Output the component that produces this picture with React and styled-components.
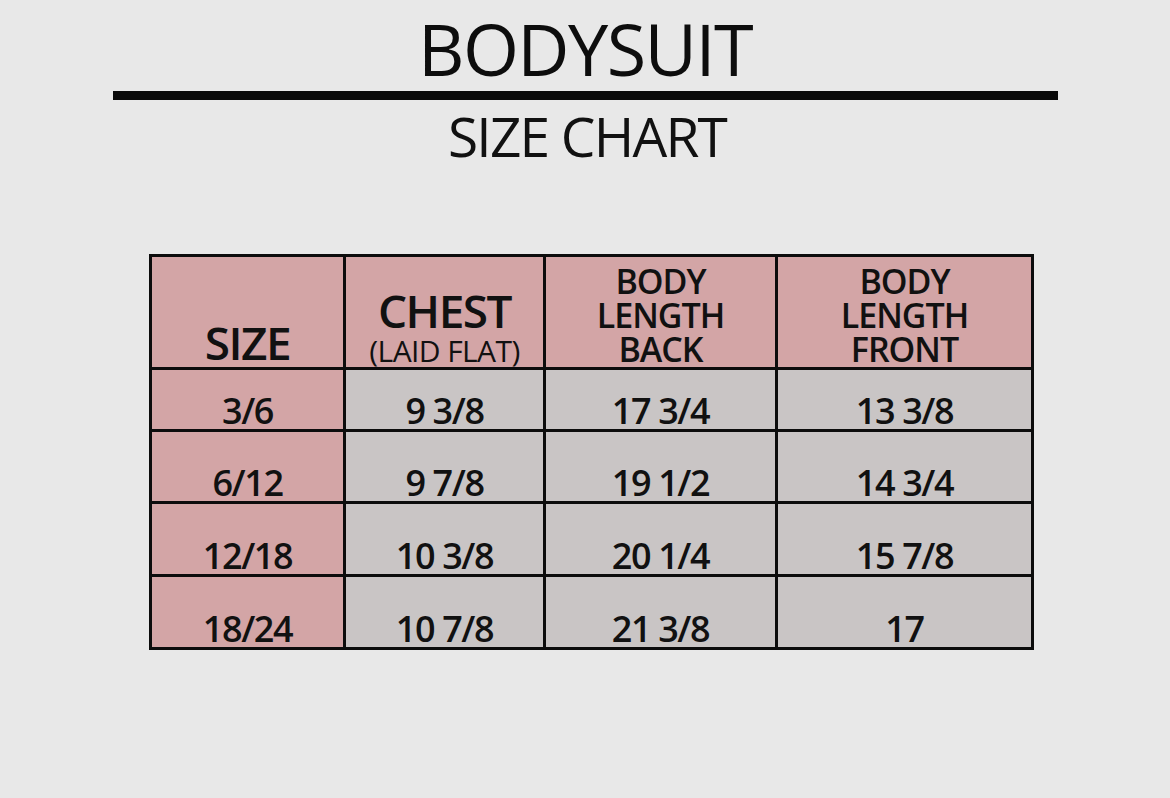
import React from "react";
import styled, { createGlobalStyle } from "styled-components";

const Global = createGlobalStyle`
  html, body { margin: 0; padding: 0; background: #e8e8e8; }
  body { font-family: "Open Sans", "Noto Sans", sans-serif; color: #111; }
`;

const Page = styled.div`
  width: 1170px;
  height: 798px;
  display: flex;
  flex-direction: column;
  align-items: center;
  background: #e8e8e8;
  overflow: hidden;
`;

const Title = styled.h1`
  margin: 12px 0 0 0;
  font-size: 72px;
  line-height: 72px;
  font-weight: 400;
  letter-spacing: -1.6px;
  color: #0d0d0d;
`;

const Rule = styled.div`
  width: 945px;
  height: 9px;
  margin-top: 7px;
  background: #0a0a0a;
`;

const Subtitle = styled.h2`
  margin: 7px 0 0 4px;
  font-size: 55px;
  line-height: 57px;
  font-weight: 400;
  letter-spacing: -1.8px;
  color: #111;
`;

const Table = styled.div`
  margin-top: 90px;
  margin-left: 13px;
  display: grid;
  grid-template-columns: 191px 197px 229px 253px;
  grid-template-rows: 110px 59px 69px 70px 70px;
  gap: 3px;
  padding: 3px;
  background: #0c0c0c;
`;

const Cell = styled.div`
  background: ${(p) => (p.$pink ? "#d3a5a6" : "#c9c5c5")};
  display: flex;
  flex-direction: column;
  align-items: center;
  justify-content: flex-end;
  text-align: center;
  padding-bottom: ${(p) => p.$pb ?? 0}px;
`;

const HeadBig = styled.span`
  font-size: 46px;
  line-height: 46px;
  font-weight: 600;
  letter-spacing: -1.5px;
`;

const HeadSmall = styled.span`
  font-size: 30px;
  line-height: 30px;
  font-weight: 500;
  letter-spacing: -0.6px;
  margin-top: 3px;
`;

const HeadStack = styled.span`
  font-size: 34px;
  line-height: 34px;
  font-weight: 600;
  letter-spacing: -1px;
`;

const Value = styled.span`
  font-size: 36px;
  line-height: 36px;
  font-weight: 550;
  letter-spacing: -1.4px;
`;

const rows = [
  ["3/6", "9 3/8", "17 3/4", "13 3/8"],
  ["6/12", "9 7/8", "19 1/2", "14 3/4"],
  ["12/18", "10 3/8", "20 1/4", "15 7/8"],
  ["18/24", "10 7/8", "21 3/8", "17"],
];

export default function App() {
  return (
    <>
      <Global />
      <Page>
        <Title>BODYSUIT</Title>
        <Rule />
        <Subtitle>SIZE CHART</Subtitle>
        <Table>
          <Cell $pink $pb={2}>
            <HeadBig>SIZE</HeadBig>
          </Cell>
          <Cell $pink $pb={1}>
            <HeadBig>CHEST</HeadBig>
            <HeadSmall>(LAID FLAT)</HeadSmall>
          </Cell>
          <Cell $pink $pb={1}>
            <HeadStack>
              BODY
              <br />
              LENGTH
              <br />
              BACK
            </HeadStack>
          </Cell>
          <Cell $pink $pb={1}>
            <HeadStack>
              BODY
              <br />
              LENGTH
              <br />
              FRONT
            </HeadStack>
          </Cell>
          {rows.map((r, i) =>
            r.map((v, j) => (
              <Cell key={`${i}-${j}`} $pink={j === 0} $pb={0}>
                <Value>{v}</Value>
              </Cell>
            ))
          )}
        </Table>
      </Page>
    </>
  );
}
